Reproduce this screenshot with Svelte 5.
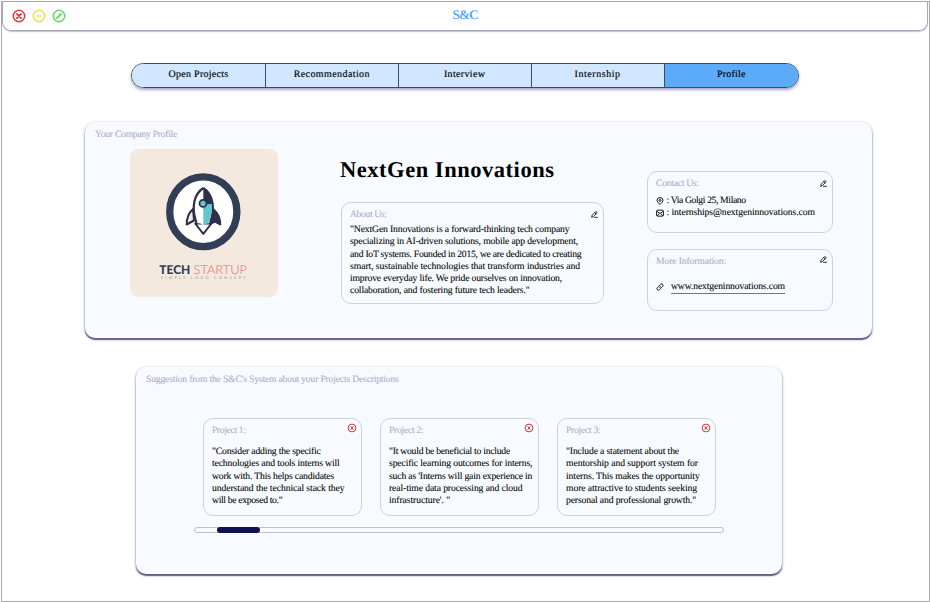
<script>
  const tabs = [
    { name: 'Open Projects', w: 60, size: 134 },
    { name: 'Recommendation', w: 76.3, size: 132.6 },
    { name: 'Interview', w: 41.3, size: 133 },
    { name: 'Internship', w: 46, size: 133 },
    { name: 'Profile', w: 28.5, size: 134.4, active: true },
  ];

  const about = [
    ['"NextGen Innovations is a forward-thinking tech company', 219.5],
    ['specializing in AI-driven solutions, mobile app development,', 228],
    ['and IoT systems. Founded in 2015, we are dedicated to creating', 231.3],
    ['smart, sustainable technologies that transform industries and', 230],
    ['improve everyday life. We pride ourselves on innovation,', 212],
    ['collaboration, and fostering future tech leaders."', 179.5],
  ];

  const projects = [
    {
      title: 'Project 1:', w: 33.5,
      lines: [
        ['"Consider adding the specific', 108.7],
        ['technologies and tools interns will', 127.5],
        ['work with. This helps candidates', 122],
        ['understand the technical stack they', 132.5],
        ['will be exposed to."', 70.3],
      ],
    },
    {
      title: 'Project 2:', w: 34.5,
      lines: [
        ['"It would be beneficial to include', 121],
        ['specific learning outcomes for interns,', 143.3],
        ["such as 'Interns will gain experience in", 143.3],
        ['real-time data processing and cloud', 133.5],
        ["infrastructure'. \"", 61],
      ],
    },
    {
      title: 'Project 3:', w: 34.5,
      lines: [
        ['"Include a statement about the', 113],
        ['mentorship and support system for', 132],
        ['interns. This makes the opportunity', 133.7],
        ['more attractive to students seeking', 131],
        ['personal and professional growth."', 130],
      ],
    },
  ];

  // Tracks a line of text so that it fills the given measure.
  function fit(node, width) {
    const natural = node.getBoundingClientRect().width;
    node.style.letterSpacing = `${(width - natural) / node.textContent.length}px`;
  }
</script>

{#snippet pen()}
  <svg class="pen" viewBox="0 0 14 14" fill="none" stroke="#111" stroke-width="1.7" stroke-linejoin="round" stroke-linecap="round">
    <path d="M1.500 12l.8-3.600L9 1.500q1-.8 2 0l.7.700q.9 1 0 2L5 11zM7.500 3.300l2.500 2.500M7 12.700h6" />
  </svg>
{/snippet}

{#snippet text(content, width)}
  <span class="t" use:fit={width}>{content}</span>
{/snippet}

<div class="window">
  <header>
    <div class="controls">
      <svg viewBox="0 0 14 14" stroke="#df3f48"><circle cx="7" cy="7" r="5.700" /><path d="M5 5l4 4M9 5l-4 4" stroke-width="1.900" /></svg>
      <svg viewBox="0 0 14 14" stroke="#f3df48"><circle cx="7" cy="7" r="5.700" /><path d="M5 7h4" /></svg>
      <svg viewBox="0 0 14 14" stroke="#62dc62"><circle cx="7" cy="7" r="5.700" /><path d="M5 9l4-4" stroke-width="1.900" /></svg>
    </div>
    <div class="brand">{@render text('S&C', 25)}</div>
  </header>

  <nav>
    {#each tabs as tab}
      <div class="tab" class:active={tab.active} style:flex-grow={tab.size}>{@render text(tab.name, tab.w)}</div>
    {/each}
  </nav>

  <section class="panel company">
    <div class="label">{@render text('Your Company Profile', 82)}</div>
    <div class="columns">
      <svg class="logo" viewBox="0 0 148 148">
        <rect width="148" height="148" fill="#f4e9de" />
        <ellipse cx="73.300" cy="62.700" rx="33.600" ry="34.900" fill="#fff" stroke="#323e55" stroke-width="7.300" />
        <path d="M63 60q-6.500 6-6.300 15.500l7.300-4z" fill="#f4e9de" stroke="#302f4b" stroke-width="2" stroke-linejoin="round" />
        <path d="M83.500 60q7 6 7 15.700l-5.500-3-4 2z" fill="#302f4b" stroke="#302f4b" stroke-width="1.600" stroke-linejoin="round" />
        <path d="M65.200 74.500h16.200L73.300 84.800z" fill="#fff" stroke="#302f4b" stroke-width="2" stroke-linejoin="round" />
        <path d="M73.300 39C64 45 61 58 66.500 74l4 .5 2.800 2 2.800-2 4-.5C85.500 58 82.500 45 73.300 39z" fill="#fff" />
        <path d="M73.300 39C64 45 61 58 66.500 74M80.100 74C85.500 58 82.500 45 73.300 39" fill="none" stroke="#302f4b" stroke-width="2.200" stroke-linejoin="round" />
        <path d="M73.300 39C82 45 84.500 52 83 60h-9.700z" fill="#302f4b" />
        <path d="M73.300 55h8.700q.7 10-3.500 18.500l-3.500 2.500h-1.700z" fill="#62c5cf" />
        <circle cx="73" cy="54.400" r="3.500" fill="#62c5cf" stroke="#302f4b" stroke-width="1.800" />
        <g font-family="Lato, sans-serif">
          <text x="29.300" y="125" font-size="12.200" font-weight="900" fill="#323e55" textLength="31" lengthAdjust="spacingAndGlyphs">TECH</text>
          <text x="63.500" y="125" font-size="12.200" font-weight="300" fill="#e68c80" stroke="#e68c80" stroke-width=".2" textLength="53.500" lengthAdjust="spacingAndGlyphs">STARTUP</text>
          <text x="31" y="129.700" font-size="3.800" fill="#99938f" textLength="84.500">SIMPLE LOGO CONCEPT</text>
        </g>
      </svg>

      <div class="middle">
        <h1>{@render text('NextGen Innovations', 214.5)}</h1>
        <div class="box about">
          {@render pen()}
          <div class="label">{@render text('About Us:', 36.5)}</div>
          <div class="copy">
            {#each about as [line, w]}<div>{@render text(line, w)}</div>{/each}
          </div>
        </div>
      </div>

      <div class="side">
        <div class="box">
          {@render pen()}
          <div class="label">{@render text('Contact Us:', 42.7)}</div>
          <div class="copy">
            <div class="row">
              <svg viewBox="0 0 14 14"><path d="M7 13Q1.700 8.700 1.700 5.800a5.300 4.900 0 0 1 10.600 0Q12.300 8.700 7 13z" /><circle cx="7" cy="6" r="1.700" /></svg>
              {@render text(': Via Golgi 25, Milano', 79.3)}
            </div>
            <div class="row">
              <svg viewBox="0 0 14 14"><rect x="1" y="2" width="12" height="10.500" rx="2" /><path d="M1.500 4l5.500 4 5.500-4M2 12l3.500-4M12 12L8.500 8" /></svg>
              {@render text(': internships@nextgeninnovations.com', 148.5)}
            </div>
          </div>
        </div>
        <div class="box">
          {@render pen()}
          <div class="label">{@render text('More Information:', 70)}</div>
          <div class="copy link">
            <svg viewBox="0 0 14 14"><path d="M6 8.200Q4 6.500 5.500 4.800L8 2.300q2-1.600 3.700 0 1.600 1.700 0 3.700L10 7.700M8 5.800q2 1.700.5 3.400L6 11.700q-2 1.600-3.700 0-1.600-1.700 0-3.700L4 6.300" /></svg>
            <a href="#site">{@render text('www.nextgeninnovations.com', 114)}</a>
          </div>
        </div>
      </div>
    </div>
  </section>

  <section class="panel suggestions">
    <div class="label">{@render text("Suggestion from the S&C's System about your Projects Descriptions", 252.7)}</div>
    <div class="cards">
      {#each projects as p}
        <article class="box">
          <svg class="close" viewBox="0 0 10 10" fill="none" stroke="#dc3038"><circle cx="5" cy="5" r="3.900" /><path d="M3.700 3.300l2.600 3.400M6.300 3.300l-2.600 3.400" /></svg>
          <div class="label">{@render text(p.title, p.w)}</div>
          <div class="copy">
            {#each p.lines as [line, w]}<div>{@render text(line, w)}</div>{/each}
          </div>
        </article>
      {/each}
    </div>
    <div class="track"><div class="thumb"></div></div>
  </section>
</div>

<style>
  :global(body) { background: #fff; }
  .window, .window * { box-sizing: border-box; }
  .window {
    width: 929px;
    height: 601px;
    margin: 1px 0 0 1px;
    border: 1px solid #a9a9ad;
    overflow: hidden;
    display: flex;
    flex-direction: column;
    align-items: flex-start;
    font: 9.7px/12.25px "Liberation Serif", serif;
    color: #000;
    text-rendering: geometricPrecision;
  }
  .t { display: inline-block; white-space: pre; }
  svg { display: block; flex: none; }

  header {
    align-self: stretch;
    height: 29px;
    margin-right: 1px;
    border: solid #a5a5c6;
    border-width: 0 1px 1px;
    border-radius: 0 0 9px 9px;
    box-shadow: 0 1px 1px #c3c3da;
    display: grid;
    grid-template-columns: 1fr auto 1fr;
  }
  .controls { display: flex; gap: 5.700px; padding: 6.700px 0 0 9.300px; }
  .controls svg { width: 14px; height: 14px; fill: none; stroke-width: 1.600; stroke-linecap: round; }
  .brand { font-size: 13.200px; line-height: 25px; font-weight: bold; color: #5aaaf8; }

  nav {
    display: flex;
    width: 668px;
    height: 25px;
    margin: 32px 0 0 129px;
    border: 1px solid #3b4767;
    border-radius: 13px;
    overflow: hidden;
    box-shadow: 0 2px 3px #aaa6c9;
  }
  .tab {
    flex: 1 1 0;
    text-align: center;
    line-height: 22.500px;
    font-size: 10px;
    background: #d1e7ff;
    -webkit-text-stroke: .15px;
  }
  .tab + .tab { border-left: 1px solid #3b4f6b; }
  .tab.active { background: #5babf8; }

  .panel {
    background: #f7fbff;
    border-radius: 10px;
    box-shadow: 0 2px 1px #64628f, 0 1px 3px #8c8ab4;
  }
  .label { color: #aeaecb; -webkit-text-stroke: .1px; height: 12px; }
  .company { width: 787px; height: 216px; margin: 34px 0 0 83px; padding: 7px 0 0 10px; }
  .columns { display: flex; align-items: flex-start; }
  .logo { width: 148px; height: 148px; border-radius: 8px; margin: 8px 0 0 35px; }
  .middle { margin: 13px 0 0 63px; width: 263px; }
  h1 { margin: 0 0 0 -1px; font-size: 22.500px; line-height: 32px; height: 48px; font-weight: bold; }
  .box {
    position: relative;
    border: 1px solid #cdd1dc;
    border-radius: 10px;
    padding: 6px 0 0 8px;
  }
  .about { height: 102px; }
  .copy { margin-top: 3px; -webkit-text-stroke: .08px; }
  .copy div { height: 12.250px; }
  .side { margin: 30px 0 0 43px; display: flex; flex-direction: column; gap: 16.500px; }
  .side .box { width: 186px; height: 61.500px; }
  .side .copy { margin-top: 4.500px; }
  .row { display: flex; gap: 2.500px; }
  .copy svg { width: 8px; height: 8px; margin-top: 2px; fill: none; stroke: #111; stroke-width: 1.700; stroke-linejoin: round; }
  .side .link { display: flex; gap: 7px; margin-top: 12.500px; }
  .link a { color: #000; text-decoration: none; border-bottom: 1px solid #777; height: 13px; }
  .pen { position: absolute; right: 5px; top: 7.500px; width: 7px; height: 7px; }
  .side .box + .box .pen { top: 5.500px; }

  .suggestions { width: 646px; height: 207px; margin: 29px 0 0 134px; padding: 7px 0 0 10px; }
  .cards { display: flex; gap: 18px; margin: 32px 0 0 57px; }
  .cards .box { width: 159px; height: 98px; }
  .cards .copy { margin-top: 9px; }
  .close { position: absolute; right: 4px; top: 4px; width: 10px; height: 10px; }
  .track { width: 530px; height: 6px; margin: 11px 0 0 48px; border: 1px solid #bcbfd4; border-radius: 3px; }
  .thumb { width: 43px; height: 6px; margin: -1px 0 0 22px; background: #10124c; border-radius: 3px; }
</style>
